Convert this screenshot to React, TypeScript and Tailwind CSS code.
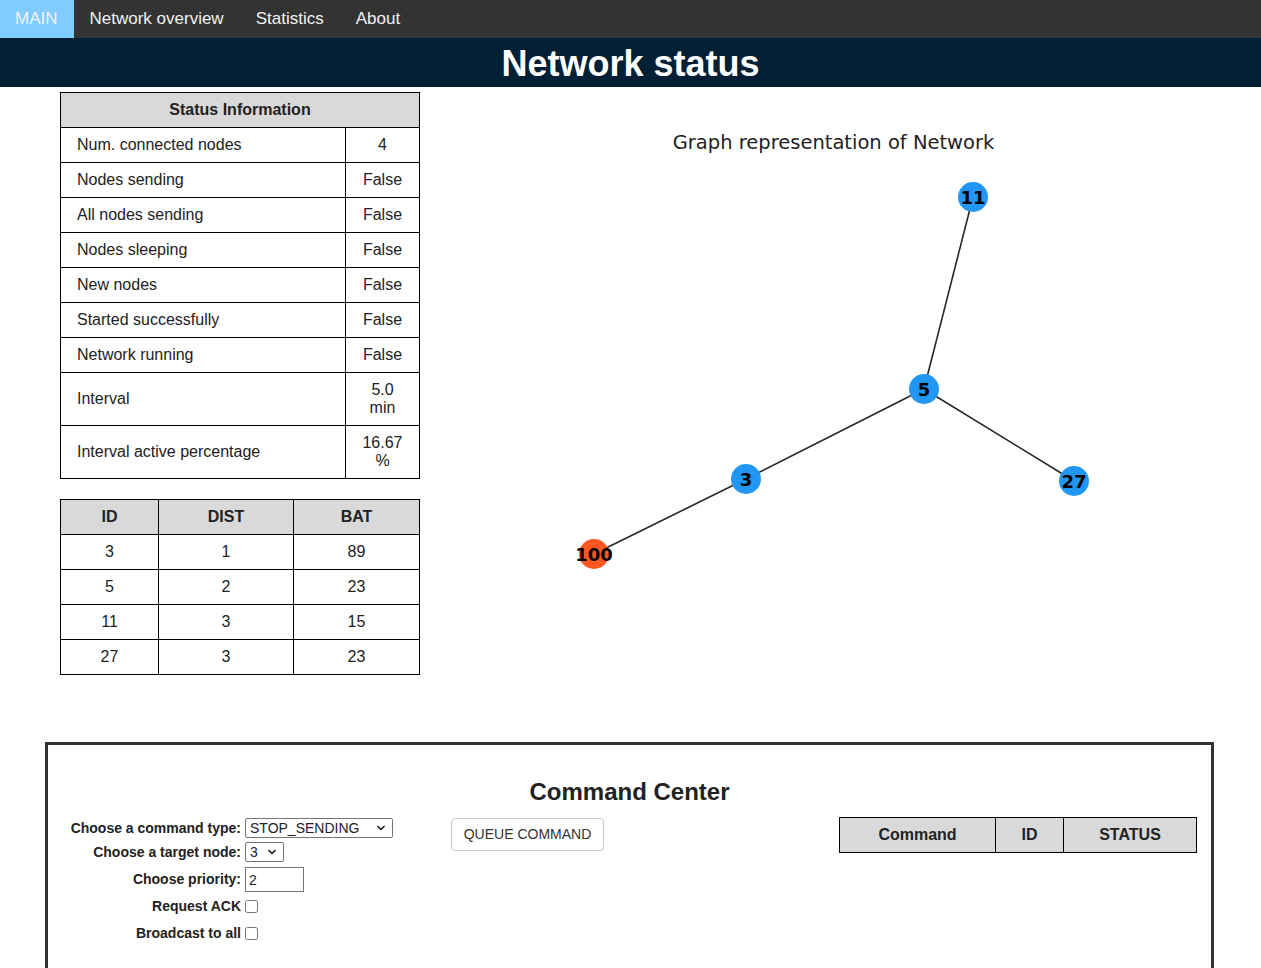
import { ChevronDown } from "lucide-react"

const statusRows = [
  { label: "Num. connected nodes", value: "4" },
  { label: "Nodes sending", value: "False" },
  { label: "All nodes sending", value: "False" },
  { label: "Nodes sleeping", value: "False" },
  { label: "New nodes", value: "False" },
  { label: "Started successfully", value: "False" },
  { label: "Network running", value: "False" },
  { label: "Interval", value: "5.0 min" },
  { label: "Interval active percentage", value: "16.67 %" },
]

const nodeRows = [
  { id: 3, dist: 1, bat: 89 },
  { id: 5, dist: 2, bat: 23 },
  { id: 11, dist: 3, bat: 15 },
  { id: 27, dist: 3, bat: 23 },
]

// graph positions are in page coordinates (the svg viewBox starts at 420,92)
const nodes = [
  { id: "11", x: 973, y: 197, color: "#2196f3" },
  { id: "5", x: 924, y: 389, color: "#2196f3" },
  { id: "3", x: 746, y: 479, color: "#2196f3" },
  { id: "27", x: 1074, y: 481, color: "#2196f3" },
  { id: "100", x: 594, y: 554, color: "#ff5722" },
]

const edges = [
  ["100", "3"],
  ["3", "5"],
  ["5", "11"],
  ["5", "27"],
]

function NetworkGraph() {
  const pos = (id: string) => nodes.find((n) => n.id === id)!
  return (
    <svg width={840} height={600} viewBox="420 92 840 600" className="block shrink-0">
      <text
        x={833.5}
        y={149}
        textAnchor="middle"
        fontSize={19.5}
        fill="#222"
        fontFamily="'DejaVu Sans', sans-serif"
      >
        Graph representation of Network
      </text>
      {edges.map(([a, b]) => (
        <line
          key={a + b}
          x1={pos(a).x}
          y1={pos(a).y}
          x2={pos(b).x}
          y2={pos(b).y}
          stroke="#262626"
          strokeWidth={1.6}
        />
      ))}
      {nodes.map((n) => (
        <g key={n.id}>
          <circle cx={n.x} cy={n.y} r={15} fill={n.color} />
          <text
            x={n.x}
            y={n.y + 6.5}
            textAnchor="middle"
            fontSize={18}
            fontWeight="bold"
            fill="#000"
            fontFamily="'DejaVu Sans', sans-serif"
          >
            {n.id}
          </text>
        </g>
      ))}
    </svg>
  )
}

function StatusTable() {
  return (
    <table className="w-[359px] table-fixed border-collapse text-[16px] leading-[18px] text-[#222]">
      <colgroup>
        <col className="w-[285px]" />
        <col className="w-[74px]" />
      </colgroup>
      <thead>
        <tr>
          <th colSpan={2} className="border border-black bg-[#d9d9d9] py-[8px] font-bold">
            Status Information
          </th>
        </tr>
      </thead>
      <tbody>
        {statusRows.map((row) => (
          <tr key={row.label}>
            <td className="border border-black px-4 py-[8px]">{row.label}</td>
            <td className="border border-black px-4 py-[8px] text-center">{row.value}</td>
          </tr>
        ))}
      </tbody>
    </table>
  )
}

function NodeTable() {
  return (
    <table className="mt-[20px] w-[359px] table-fixed border-collapse text-[16px] leading-[18px] text-[#222]">
      <colgroup>
        <col className="w-[98px]" />
        <col className="w-[135px]" />
        <col className="w-[126px]" />
      </colgroup>
      <thead>
        <tr>
          <th className="border border-black bg-[#d9d9d9] py-[8px] font-bold">ID</th>
          <th className="border border-black bg-[#d9d9d9] py-[8px] font-bold">DIST</th>
          <th className="border border-black bg-[#d9d9d9] py-[8px] font-bold">BAT</th>
        </tr>
      </thead>
      <tbody>
        {nodeRows.map((row) => (
          <tr key={row.id}>
            <td className="border border-black py-[8px] text-center">{row.id}</td>
            <td className="border border-black py-[8px] text-center">{row.dist}</td>
            <td className="border border-black py-[8px] text-center">{row.bat}</td>
          </tr>
        ))}
      </tbody>
    </table>
  )
}

function CommandForm() {
  return (
    <div className="mt-[1px] w-[403px] shrink-0 pl-[22px] text-[14px] font-bold text-[#222]">
      <div className="flex h-[20px] items-center">
        <label className="w-[175px] whitespace-nowrap pr-[4px] text-right">Choose a command type:</label>
        <div className="relative h-[20px] w-[148px]">
          <select className="h-full w-full appearance-none rounded-[2px] border border-[#767676] bg-white pl-[4px] text-[14px] font-normal leading-[18px]">
            <option>STOP_SENDING</option>
          </select>
          <ChevronDown className="pointer-events-none absolute right-[6px] top-[4px] h-[12px] w-[12px]" strokeWidth={3.5} />
        </div>
      </div>
      <div className="mt-[4px] flex h-[20px] items-center">
        <label className="w-[175px] whitespace-nowrap pr-[4px] text-right">Choose a target node:</label>
        <div className="relative h-[20px] w-[39px]">
          <select className="h-full w-full appearance-none rounded-[2px] border border-[#767676] bg-white pl-[4px] text-[14px] font-normal leading-[18px]">
            <option>3</option>
          </select>
          <ChevronDown className="pointer-events-none absolute right-[6px] top-[4px] h-[12px] w-[12px]" strokeWidth={3.5} />
        </div>
      </div>
      <div className="mt-[5px] flex h-[25px] items-center">
        <label className="w-[175px] whitespace-nowrap pr-[4px] text-right">Choose priority:</label>
        <input
          defaultValue="2"
          className="h-[25px] w-[59px] border border-[#767676] bg-white px-[3px] text-[14px] font-normal"
        />
      </div>
      <div className="mt-[4px] flex h-[20px] items-center">
        <label className="w-[175px] whitespace-nowrap pr-[4px] text-right">Request ACK</label>
        <input type="checkbox" className="m-0 h-[13px] w-[13px]" />
      </div>
      <div className="mt-[7px] flex h-[20px] items-center">
        <label className="w-[175px] whitespace-nowrap pr-[4px] text-right">Broadcast to all</label>
        <input type="checkbox" className="m-0 h-[13px] w-[13px]" />
      </div>
    </div>
  )
}

function CommandCenter() {
  return (
    <section className="ml-[45px] mt-[50px] h-[300px] w-[1169px] border-[3px] border-[#333] pt-[33px]">
      <h2 className="text-center text-[24px] font-bold leading-[28px] text-[#222]">Command Center</h2>
      <div className="mt-[11px] flex items-start">
        <CommandForm />
        <button className="mt-[1px] h-[33px] w-[153px] shrink-0 rounded-[4px] border border-[#c8c8c8] bg-white text-[14px] text-[#333]">
          QUEUE COMMAND
        </button>
        <table className="ml-auto mr-[14px] w-[357px] table-fixed border-collapse text-[16px] text-[#222]">
          <colgroup>
            <col className="w-[156px]" />
            <col className="w-[68px]" />
            <col className="w-[133px]" />
          </colgroup>
          <thead>
            <tr>
              <th className="h-[35px] border border-black bg-[#d9d9d9] p-0 font-bold">Command</th>
              <th className="h-[35px] border border-black bg-[#d9d9d9] p-0 font-bold">ID</th>
              <th className="h-[35px] border border-black bg-[#d9d9d9] p-0 font-bold">STATUS</th>
            </tr>
          </thead>
        </table>
      </div>
    </section>
  )
}

export default function App() {
  return (
    <div className="min-h-screen bg-white font-['Liberation_Sans',Arial,sans-serif]">
      <nav className="flex h-[38px] bg-[#333333] text-[17px] text-[#f2f2f2]">
        <a className="flex items-center bg-[#80cbff] pl-[15px] pr-[16px]">MAIN</a>
        <a className="flex items-center px-4">Network overview</a>
        <a className="flex items-center px-4">Statistics</a>
        <a className="flex items-center px-4">About</a>
      </nav>
      <header className="flex h-[49px] items-center justify-center bg-[#011f35] pt-[1px]">
        <h1 className="text-[36px] font-bold leading-[41px] text-white">Network status</h1>
      </header>
      <main className="flex pt-[5px]">
        <div className="ml-[60px] w-[360px] shrink-0">
          <StatusTable />
          <NodeTable />
        </div>
        <NetworkGraph />
      </main>
      <CommandCenter />
    </div>
  )
}
